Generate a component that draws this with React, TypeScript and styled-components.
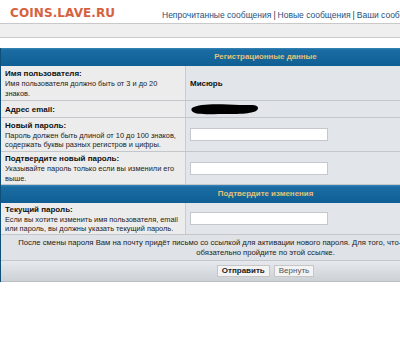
import styled, { createGlobalStyle } from 'styled-components'

const Global = createGlobalStyle`
    html, body {
        margin: 0;
        padding: 0;
        background: #fff;
        overflow: hidden;
    }
    body {
        font-family: 'Liberation Sans', Arial, sans-serif;
        color: #222;
    }
`

const Page = styled.div`
    width: 530px;
`

const TopBar = styled.header`
    height: 23px;
    display: flex;
    align-items: flex-start;
    white-space: nowrap;
`
const Logo = styled.div`
    font-family: 'DejaVu Sans', Verdana, sans-serif;
    font-weight: bold;
    font-size: 12px;
    letter-spacing: 0.1px;
    color: #d6613f;
    padding: 6px 0 0 10px;
    width: 152px;
`
const Nav = styled.nav`
    font-size: 8.5px;
    padding-top: 10px;
    color: #1f4f7b;
    & span {
        margin: 0 2px;
        color: #333;
    }
`
const GreyBar = styled.div`
    height: 13px;
    background: #efefef;
    border-top: 1px solid #c9c9c9;
    border-bottom: 1px solid #c9c9c9;
`

const Form = styled.div`
    margin-top: 10px;
    border-left: 1px solid #0f4f7a;
`
const Caption = styled.div`
    height: 18px;
    line-height: 18px;
    text-align: center;
    font-size: 7.9px;
    font-weight: bold;
    color: #e3c27a;
    background: linear-gradient(#3a86b8 0, #1a6ca2 2px, #0f5f94 100%);
`
const Row = styled.div<{ h: number }>`
    display: grid;
    grid-template-columns: 185px 1fr;
    height: ${({ h }) => h}px;
    border-bottom: 1px solid #c3c7cc;
`
const Label = styled.div`
    background: #ececec;
    border-right: 1px solid #c9cdd2;
    padding: 1px 4px 0 4px;
    display: flex;
    flex-direction: column;
    justify-content: center;
    & b {
        font-size: 8px;
        color: #111;
        line-height: 10px;
    }
    & small {
        font-size: 7.4px;
        line-height: 9.5px;
        color: #222;
    }
`
const Value = styled.div`
    background: #e2e5e9;
    display: flex;
    align-items: center;
    padding-left: 4px;
    font-size: 8px;
    font-weight: bold;
    color: #111;
`
const Input = styled.input`
    width: 138px;
    height: 13px;
    box-sizing: border-box;
    border: 1px solid #c4c8cc;
    background: #fff;
    padding: 0;
    margin: 0;
`
const Note = styled.div`
    background: #dfe2e6;
    text-align: center;
    font-size: 7.7px;
    line-height: 10px;
    color: #222;
    padding: 3px 0 2px;
    white-space: nowrap;
    border-bottom: 1px solid #c3c7cc;
`
const Buttons = styled.div`
    height: 20px;
    display: flex;
    justify-content: center;
    align-items: center;
    gap: 4px;
    background: linear-gradient(#e6e9ed, #ccd1d6);
    border-bottom: 1px solid #b9bec4;
`
const Button = styled.button<{ primary?: boolean }>`
    font-family: 'Liberation Sans', Arial, sans-serif;
    font-size: 8px;
    font-weight: ${({ primary }) => (primary ? 'bold' : 'normal')};
    color: ${({ primary }) => (primary ? '#222' : '#555')};
    background: #f3f3f3;
    border: 1px solid #c6c6c6;
    height: 12px;
    padding: 0 4px;
    line-height: 10px;
`

const Scribble = () => (
    <svg width="70" height="14" viewBox="0 0 70 14">
        <path d="M2 6 C10 1 30 2 50 3 C60 3 68 2 68 6 C68 10 60 12 40 12 C20 12 6 13 3 10 C1 9 1 7 2 6 Z" fill="#000" />
    </svg>
)

const App = () => {
    return (
        <Page>
            <Global />
            <TopBar>
                <Logo>COINS.LAVE.RU</Logo>
                <Nav>
                    Непрочитанные сообщения<span>|</span>Новые сообщения<span>|</span>Ваши сообщения
                </Nav>
            </TopBar>
            <GreyBar />
            <Form>
                <Caption>Регистрационные данные</Caption>
                <Row h={34}>
                    <Label>
                        <b>Имя пользователя:</b>
                        <small>Имя пользователя должно быть от 3 и до 20 знаков.</small>
                    </Label>
                    <Value>Мисюрь</Value>
                </Row>
                <Row h={16}>
                    <Label>
                        <b>Адрес email:</b>
                    </Label>
                    <Value>
                        <Scribble />
                    </Value>
                </Row>
                <Row h={33}>
                    <Label>
                        <b>Новый пароль:</b>
                        <small>Пароль должен быть длиной от 10 до 100 знаков, содержать буквы разных регистров и цифры.</small>
                    </Label>
                    <Value>
                        <Input type="password" />
                    </Value>
                </Row>
                <Row h={32}>
                    <Label>
                        <b>Подтвердите новый пароль:</b>
                        <small>Указывайте пароль только если вы изменили его выше.</small>
                    </Label>
                    <Value>
                        <Input type="password" />
                    </Value>
                </Row>
                <Caption>Подтвердите изменения</Caption>
                <Row h={31}>
                    <Label>
                        <b>Текущий пароль:</b>
                        <small>Если вы хотите изменить имя пользователя, email или пароль, вы должны указать текущий пароль.</small>
                    </Label>
                    <Value>
                        <Input type="password" />
                    </Value>
                </Row>
                <Note>
                    После смены пароля Вам на почту придёт письмо со ссылкой для активации нового пароля. Для того, что-бы изменения вступили в силу,
                    <br />
                    обязательно пройдите по этой ссылке.
                </Note>
                <Buttons>
                    <Button primary>Отправить</Button>
                    <Button>Вернуть</Button>
                </Buttons>
            </Form>
        </Page>
    )
}

export default App
